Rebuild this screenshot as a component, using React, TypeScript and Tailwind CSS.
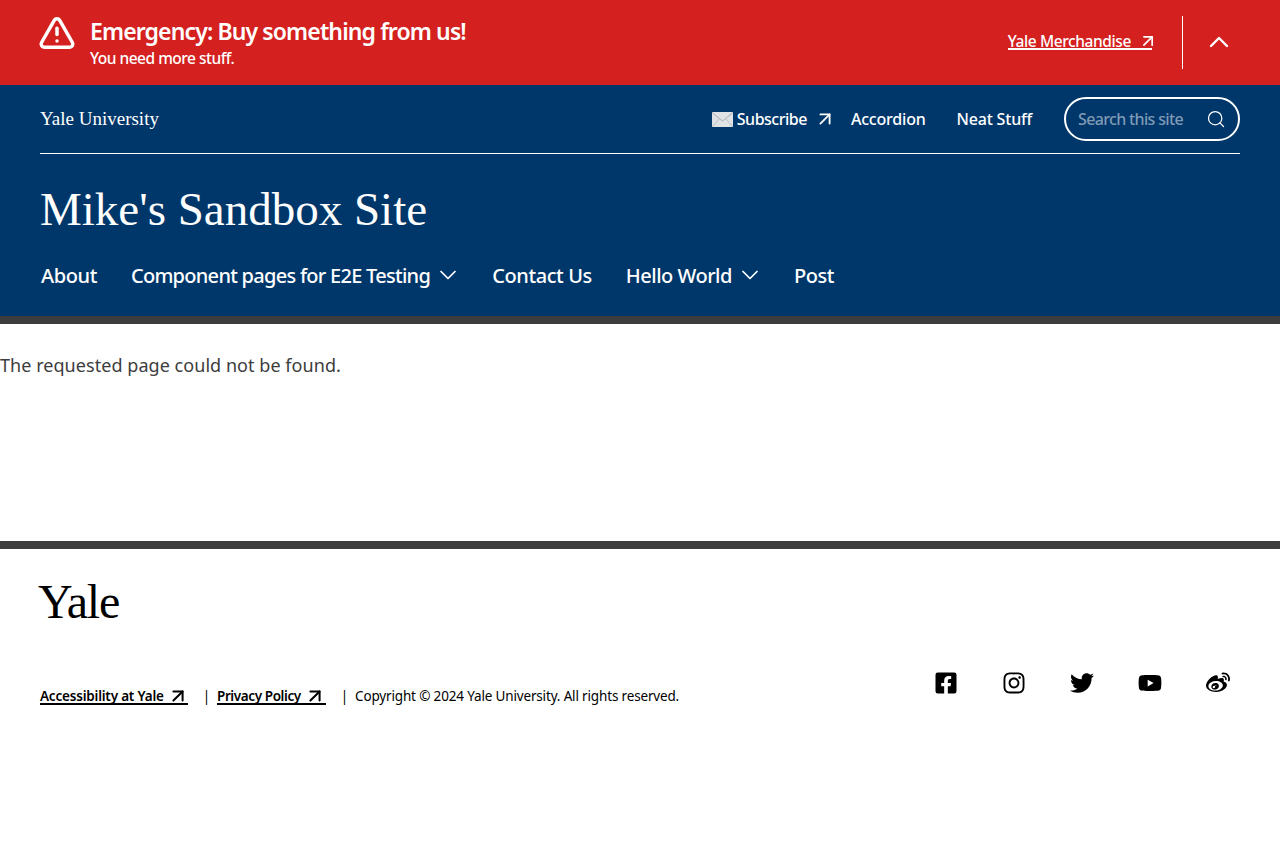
import React from 'react'
import { ChevronDown, ChevronUp, Search, TriangleAlert, ArrowUpRight } from 'lucide-react'
import { FaFacebookSquare, FaInstagram, FaTwitter, FaYoutube, FaWeibo } from 'react-icons/fa'

const sans = "font-['Noto_Sans',sans-serif]"
const serif = "font-['Liberation_Serif',serif]"

const Envelope: React.FC = () => (
  <svg width="21" height="15" viewBox="0 0 21 15" className="shrink-0">
    <rect x="0" y="0" width="21" height="15" rx="1" fill="#dfe3e6" />
    <path d="M0.5 1 L10.5 9 L20.5 1" fill="none" stroke="#a3acb3" strokeWidth="1" />
    <path d="M0.5 14.5 L7.5 6.5 M20.5 14.5 L13.5 6.5" fill="none" stroke="#b8c0c6" strokeWidth="1" />
  </svg>
)

const socials = [FaFacebookSquare, FaInstagram, FaTwitter, FaYoutube, FaWeibo]

export default function App() {
  return (
    <div className={`${sans} min-h-[843px] bg-white text-[#3d3d3d]`}>
      {/* Alert */}
      <div className="flex h-[85px] items-center justify-between bg-[#d4211f] pl-10 pr-[45px] text-white">
        <div className="flex items-start gap-[14px]">
          <TriangleAlert size={38} strokeWidth={2.2} className="-ml-0.5 -mt-0.5" />
          <div>
            <div className="text-[23px] font-semibold leading-[30px] tracking-[-0.88px]">Emergency: Buy something from us!</div>
            <div className="text-[15.5px] font-medium leading-[24px] tracking-[-0.5px]">You need more stuff.</div>
          </div>
        </div>
        <div className="flex items-center">
          <a className="mb-1 flex h-[19px] items-center gap-[7px] border-b-2 border-white pt-[3px] text-[15.5px] font-medium leading-[19px] tracking-[-0.4px]">
            Yale Merchandise
            <ArrowUpRight size={20} strokeWidth={2} className="-my-1 -mr-[6px]" />
          </a>
          <div className="ml-[30px] h-[53px] w-px bg-white" />
          <ChevronUp size={32} strokeWidth={1.8} className="ml-5 -mt-px" />
        </div>
      </div>

      {/* Header */}
      <header className="bg-[#00376b] px-10 text-white">
        <div className="flex h-[69px] items-center justify-between border-b border-white">
          <div className={`${serif} text-[19px]`}>Yale University</div>
          <div className="flex items-center text-[16px] font-medium tracking-[-0.2px]">
            <Envelope />
            <a className="ml-1 tracking-[-0.5px]">Subscribe</a>
            <ArrowUpRight size={22} strokeWidth={2} className="-my-1 ml-[7px]" />
            <a className="ml-[15px]">Accordion</a>
            <a className="ml-[31px]">Neat Stuff</a>
            <div className="ml-8 flex h-11 w-[176px] items-center justify-between rounded-[22px] border-2 border-white pl-3 pr-[12px]">
              <span className="tracking-[-0.65px] text-[#7f9ab5]">Search this site</span>
              <Search size={20} strokeWidth={1.5} />
            </div>
          </div>
        </div>
        <div className={`${serif} pt-[25px] text-[47px] leading-[60px]`}>Mike's Sandbox Site</div>
        <nav className="flex h-[77px] items-start pl-px pt-[23px] text-[20px] font-medium leading-[28px] tracking-[-0.4px]">
          <a>About</a>
          <a className="ml-[34px] tracking-[-0.72px]">Component pages for E2E Testing</a>
          <ChevronDown size={28} strokeWidth={1.5} className="ml-1 -mt-px" />
          <a className="ml-[30px]">Contact Us</a>
          <a className="ml-[34px] tracking-[-0.5px]">Hello World</a>
          <ChevronDown size={28} strokeWidth={1.5} className="ml-1 -mt-px" />
          <a className="ml-[30px]">Post</a>
        </nav>
      </header>

      {/* Main */}
      <main className="h-[233px] border-y-8 border-[#3d3d3d] pt-[28px] text-[18px] leading-[27px] tracking-[0.05px]">
        The requested page could not be found.
      </main>

      {/* Footer */}
      <footer className="px-10 text-black">
        <div className={`${serif} -ml-0.5 mt-[23px] text-[48px] leading-[60px] tracking-[-1.2px]`}>Yale</div>
        <div className="mt-[39px] flex items-start justify-between">
          <div className="mt-[15px] flex items-start text-[13.5px] leading-[20px] tracking-[-0.2px]">
            <a className="flex h-[19px] items-center gap-[3px] border-b-2 border-black pt-[2px] font-semibold">
              Accessibility at Yale
              <ArrowUpRight size={22} strokeWidth={2.2} className="-my-1 -mr-[1px]" />
            </a>
            <span className="ml-[15px] mr-[7px]">|</span>
            <a className="flex h-[19px] items-center gap-[3px] border-b-2 border-black pt-[2px] font-semibold tracking-[-0.4px]">
              Privacy Policy
              <ArrowUpRight size={22} strokeWidth={2.2} className="-my-1" />
            </a>
            <span className="ml-[15px] mr-[7px]">|</span>
            <span className="tracking-[-0.16px]">Copyright © 2024 Yale University. All rights reserved.</span>
          </div>
          <div className="mr-[10px] flex gap-11">
            {socials.map((Icon, i) => (
              <Icon key={i} size={24} />
            ))}
          </div>
        </div>
      </footer>
    </div>
  )
}
